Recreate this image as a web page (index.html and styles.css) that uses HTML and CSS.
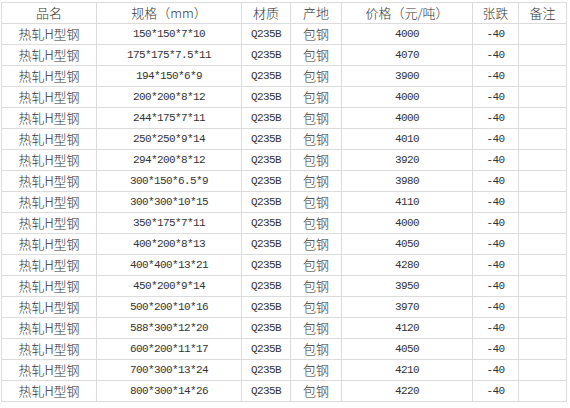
FILE: index.html
```html
<!DOCTYPE html>
<html lang="zh">
<head>
<meta charset="utf-8">
<title>热轧H型钢价格</title>
<link rel="stylesheet" href="styles.css">
</head>
<body>
<table class="price-table">
  <colgroup>
    <col class="c-name"><col class="c-spec"><col class="c-mat"><col class="c-origin"><col class="c-price"><col class="c-chg"><col class="c-note">
  </colgroup>
  <thead>
    <tr><th>品名</th><th>规格（mm）</th><th>材质</th><th>产地</th><th>价格（元/吨）</th><th>张跌</th><th>备注</th></tr>
  </thead>
  <tbody>
    <tr><td class="cn">热轧H型钢</td><td class="num">150*150*7*10</td><td class="num">Q235B</td><td class="cn">包钢</td><td class="num">4000</td><td class="num">-40</td><td></td></tr>
    <tr><td class="cn">热轧H型钢</td><td class="num">175*175*7.5*11</td><td class="num">Q235B</td><td class="cn">包钢</td><td class="num">4070</td><td class="num">-40</td><td></td></tr>
    <tr><td class="cn">热轧H型钢</td><td class="num">194*150*6*9</td><td class="num">Q235B</td><td class="cn">包钢</td><td class="num">3900</td><td class="num">-40</td><td></td></tr>
    <tr><td class="cn">热轧H型钢</td><td class="num">200*200*8*12</td><td class="num">Q235B</td><td class="cn">包钢</td><td class="num">4000</td><td class="num">-40</td><td></td></tr>
    <tr><td class="cn">热轧H型钢</td><td class="num">244*175*7*11</td><td class="num">Q235B</td><td class="cn">包钢</td><td class="num">4000</td><td class="num">-40</td><td></td></tr>
    <tr><td class="cn">热轧H型钢</td><td class="num">250*250*9*14</td><td class="num">Q235B</td><td class="cn">包钢</td><td class="num">4010</td><td class="num">-40</td><td></td></tr>
    <tr><td class="cn">热轧H型钢</td><td class="num">294*200*8*12</td><td class="num">Q235B</td><td class="cn">包钢</td><td class="num">3920</td><td class="num">-40</td><td></td></tr>
    <tr><td class="cn">热轧H型钢</td><td class="num">300*150*6.5*9</td><td class="num">Q235B</td><td class="cn">包钢</td><td class="num">3980</td><td class="num">-40</td><td></td></tr>
    <tr><td class="cn">热轧H型钢</td><td class="num">300*300*10*15</td><td class="num">Q235B</td><td class="cn">包钢</td><td class="num">4110</td><td class="num">-40</td><td></td></tr>
    <tr><td class="cn">热轧H型钢</td><td class="num">350*175*7*11</td><td class="num">Q235B</td><td class="cn">包钢</td><td class="num">4000</td><td class="num">-40</td><td></td></tr>
    <tr><td class="cn">热轧H型钢</td><td class="num">400*200*8*13</td><td class="num">Q235B</td><td class="cn">包钢</td><td class="num">4050</td><td class="num">-40</td><td></td></tr>
    <tr><td class="cn">热轧H型钢</td><td class="num">400*400*13*21</td><td class="num">Q235B</td><td class="cn">包钢</td><td class="num">4280</td><td class="num">-40</td><td></td></tr>
    <tr><td class="cn">热轧H型钢</td><td class="num">450*200*9*14</td><td class="num">Q235B</td><td class="cn">包钢</td><td class="num">3950</td><td class="num">-40</td><td></td></tr>
    <tr><td class="cn">热轧H型钢</td><td class="num">500*200*10*16</td><td class="num">Q235B</td><td class="cn">包钢</td><td class="num">3970</td><td class="num">-40</td><td></td></tr>
    <tr><td class="cn">热轧H型钢</td><td class="num">588*300*12*20</td><td class="num">Q235B</td><td class="cn">包钢</td><td class="num">4120</td><td class="num">-40</td><td></td></tr>
    <tr><td class="cn">热轧H型钢</td><td class="num">600*200*11*17</td><td class="num">Q235B</td><td class="cn">包钢</td><td class="num">4050</td><td class="num">-40</td><td></td></tr>
    <tr><td class="cn">热轧H型钢</td><td class="num">700*300*13*24</td><td class="num">Q235B</td><td class="cn">包钢</td><td class="num">4210</td><td class="num">-40</td><td></td></tr>
    <tr><td class="cn">热轧H型钢</td><td class="num">800*300*14*26</td><td class="num">Q235B</td><td class="cn">包钢</td><td class="num">4220</td><td class="num">-40</td><td></td></tr>
  </tbody>
</table>
</body>
</html>
```
FILE: styles.css
```css
html, body {
  margin: 0;
  padding: 0;
  background: #ffffff;
}
body {
  padding: 2px 0 0 1px;
  font-family: "Noto Sans CJK SC", "Liberation Sans", sans-serif;
  color: #333;
}
.price-table {
  border-collapse: collapse;
  table-layout: fixed;
  width: 566px;
}
.c-name { width: 95px; }
.c-spec { width: 145px; }
.c-mat { width: 49px; }
.c-origin { width: 51px; }
.c-price { width: 131px; }
.c-chg { width: 46px; }
.c-note { width: 48px; }
.price-table th,
.price-table td {
  border: 1px solid #dcdcdc;
  height: 20px;
  padding: 0;
  text-align: center;
  vertical-align: middle;
  line-height: 20px;
  font-size: 13px;
  font-weight: 300;
  white-space: nowrap;
  overflow: hidden;
}
.price-table th {
  color: #333;
}
.price-table td.num {
  font-family: "Liberation Mono", "DejaVu Sans Mono", monospace;
  font-size: 11px;
  font-weight: normal;
  letter-spacing: -0.6px;
  color: #333;
}
.price-table td.cn {
  color: #333;
}
```
